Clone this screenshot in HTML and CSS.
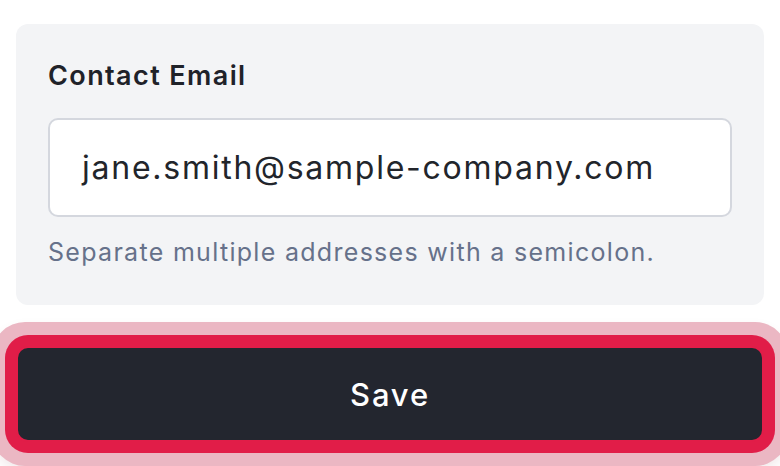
FILE: index.html
```html
<!DOCTYPE html>
<html>
<head>
<meta charset="utf-8">
<link rel="stylesheet" href="styles.css">
</head>
<body>
<main class="page">
  <section class="card">
    <label class="label" for="email">Contact Email</label>
    <div class="input" id="email">jane.smith@sample-company.com</div>
    <p class="help">Separate multiple addresses with a semicolon.</p>
  </section>
  <button class="save">Save</button>
</main>
</body>
</html>
```
FILE: styles.css
```css
* { box-sizing: border-box; }
html, body { margin: 0; padding: 0; background: #ffffff; }
body {
  font-family: "Inter", "Noto Sans", sans-serif;
  width: 780px;
  height: 466px;
  overflow: hidden;
}
.page {
  padding: 24px 16px 0;
  display: flex;
  flex-direction: column;
  gap: 41px;
}
.card {
  background: #f3f4f6;
  border-radius: 12px;
  padding: 32px 32px 0;
  height: 281px;
  display: flex;
  flex-direction: column;
}
.label {
  font-size: 27px;
  font-weight: 600;
  color: #1f2229;
  line-height: 40px;
  margin-bottom: 22px;
  letter-spacing: 1.4px;
}
.input {
  height: 99px;
  background: #ffffff;
  border: 2px solid #d4d7de;
  border-radius: 10px;
  padding: 0 32px;
  display: flex;
  align-items: center;
  font-size: 32px;
  color: #22252b;
  letter-spacing: 1.75px;
}
.help {
  margin: 19px 0 0;
  font-size: 25px;
  line-height: 32px;
  color: #66718a;
  letter-spacing: 1.3px;
}
.save {
  height: 96px;
  width: 100%;
  border: 2px solid #e11d48;
  border-radius: 12px;
  background: #23262f;
  color: #ffffff;
  font-family: "Inter", "Noto Sans", sans-serif;
  font-size: 31px;
  font-weight: 500;
  letter-spacing: 1.8px;
  box-shadow: 0 0 0 11px #e11d48, 0 0 0 24px #ebb7c3, 0 6px 14px 22px rgba(120, 40, 60, 0.12);
}
```
